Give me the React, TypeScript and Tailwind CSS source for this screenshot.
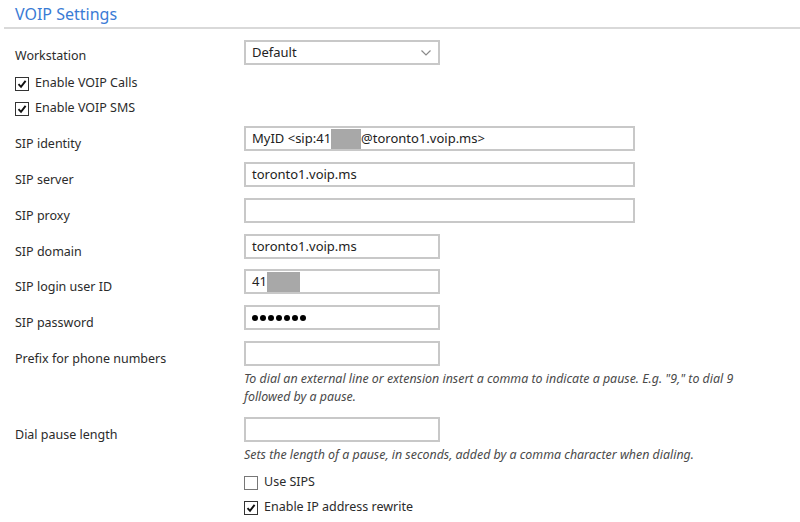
import React from 'react';

const font = { fontFamily: '"Noto Sans", "Open Sans", sans-serif' };

const Check: React.FC<{ checked?: boolean }> = ({ checked }) => (
  <span
    className={`flex h-[14px] w-[14px] shrink-0 items-center justify-center border bg-white ${
      checked ? 'border-[#333]' : 'border-[#777]'
    }`}
  >
    {checked && (
      <svg width="10" height="10" viewBox="0 0 10 10">
        <path d="M1.5 5.2 L4 7.8 L8.6 1.8" fill="none" stroke="#111" strokeWidth="1.9" />
      </svg>
    )}
  </span>
);

const CheckRow: React.FC<{ label: string; checked?: boolean; className?: string }> = ({
  label,
  checked,
  className = '',
}) => (
  <div className={`flex h-[25px] items-center gap-[6px] ${className}`}>
    <Check checked={checked} />
    <span className="text-[12.5px] text-[#2b2b2b]">{label}</span>
  </div>
);

const Field: React.FC<{
  label: string;
  wide?: boolean;
  className?: string;
  children?: React.ReactNode;
}> = ({ label, wide, className = '', children }) => (
  <div className={`flex h-[25px] ${className}`}>
    <div className="h-[25px] w-[229px] shrink-0 pt-[10px] text-[12.5px] leading-[15px] text-[#2b2b2b]">{label}</div>
    <div
      className={`flex h-[25px] items-center border-2 border-[#c8c8c8] bg-white px-[6px] text-[13px] text-[#222] ${
        wide ? 'w-[391px]' : 'w-[196px]'
      }`}
    >
      {children}
    </div>
  </div>
);

const Redact: React.FC<{ w: number }> = ({ w }) => (
  <span className="inline-block h-[20px] bg-[#a8a8a8]" style={{ width: w }} />
);

export default function App() {
  return (
    <div className="h-[522px] w-[800px] overflow-hidden bg-white" style={font}>
      <div className="pl-[15px] pt-[1px] text-[16px] leading-[26px] text-[#3a7bd5]">VOIP Settings</div>
      <div className="ml-[4px] h-[2px] bg-[#d9d9d9]" />

      <div className="pl-[15px]">
        <div className="mt-[11px] flex h-[25px]">
          <div className="w-[229px] shrink-0 pt-[6px] text-[12.5px] leading-[19px] text-[#2b2b2b]">Workstation</div>
          <div className="flex h-[25px] w-[196px] items-center justify-between border-2 border-[#c8c8c8] bg-white pl-[6px] pr-[7px] text-[13px] text-[#222]">
            <span>Default</span>
            <svg width="10" height="6" viewBox="0 0 10 6">
              <path d="M0.5 0.5 L5 5 L9.5 0.5" fill="none" stroke="#8a8a8a" strokeWidth="1.2" />
            </svg>
          </div>
        </div>

        <CheckRow label="Enable VOIP Calls" checked className="mt-[6px]" />
        <CheckRow label="Enable VOIP SMS" checked />

        <Field label="SIP identity" wide className="mt-[5px]">
          <span>MyID &lt;sip:41</span>
          <Redact w={30} />
          <span>@toronto1.voip.ms&gt;</span>
        </Field>
        <Field label="SIP server" wide className="mt-[11px]">
          toronto1.voip.ms
        </Field>
        <Field label="SIP proxy" wide className="mt-[11px]" />
        <Field label="SIP domain" className="mt-[11px]">
          toronto1.voip.ms
        </Field>
        <Field label="SIP login user ID" className="mt-[10px]">
          <span>41</span>
          <Redact w={33} />
        </Field>
        <Field label="SIP password" className="mt-[11px]">
          <span className="flex gap-[2px]">
            {Array.from({ length: 7 }).map((_, i) => (
              <span key={i} className="h-[6px] w-[6px] rounded-full bg-black" />
            ))}
          </span>
        </Field>
        <Field label="Prefix for phone numbers" className="mt-[11px]" />
        <div className="ml-[229px] mt-[4px] text-[12.4px] italic leading-[18px] text-[#4a4a4a]">
          To dial an external line or extension insert a comma to indicate a pause. E.g. "9," to dial 9
          <br />
          followed by a pause.
        </div>

        <Field label="Dial pause length" className="mt-[11px]" />
        <div className="ml-[229px] mt-[4px] text-[12.4px] italic leading-[18px] text-[#4a4a4a]">
          Sets the length of a pause, in seconds, added by a comma character when dialing.
        </div>

        <div className="ml-[229px]">
          <CheckRow label="Use SIPS" className="mt-[6px]" />
          <CheckRow label="Enable IP address rewrite" checked />
        </div>
      </div>
    </div>
  );
}
